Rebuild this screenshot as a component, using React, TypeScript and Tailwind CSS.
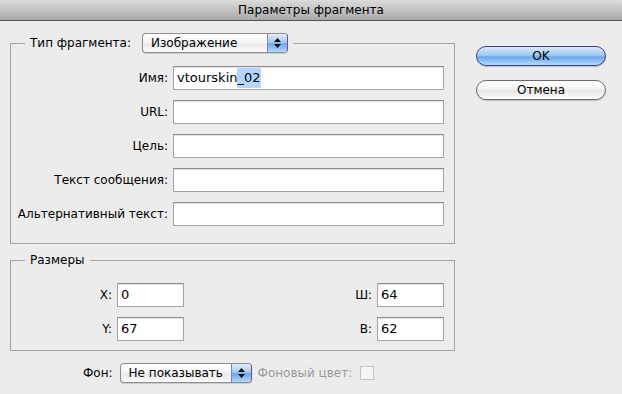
import type { ReactNode } from 'react';

const font = { fontFamily: '"DejaVu Sans", "Noto Sans", sans-serif' };

function Field({ value, selected, className = '' }: { value?: string; selected?: string; className?: string }) {
  return (
    <div
      className={`h-[24px] bg-white border border-[#a5a5a5] border-t-[#8c8c8c] shadow-[inset_0_1px_1px_rgba(0,0,0,0.12)] flex items-center pl-[3px] text-[13px] text-black whitespace-nowrap ${className}`}
    >
      {value}
      {selected && <span className="bg-[#b5d5ff]">{selected}</span>}
    </div>
  );
}

function Stepper() {
  return (
    <div className="w-[20px] h-full flex flex-col items-center justify-center gap-[2px] rounded-r-[4px] border-l border-[#7a86b8] bg-[linear-gradient(to_bottom,#e3eefb_0%,#a9c9ef_45%,#6fa6ea_55%,#b4dafc_100%)]">
      <svg width="7" height="4" viewBox="0 0 7 4">
        <path d="M3.5 0L7 4H0z" fill="#111" />
      </svg>
      <svg width="7" height="4" viewBox="0 0 7 4">
        <path d="M0 0h7L3.5 4z" fill="#111" />
      </svg>
    </div>
  );
}

function Popup({ label, className = '' }: { label: string; className?: string }) {
  return (
    <div
      className={`h-[20px] flex items-stretch rounded-[4px] border border-[#8f8f8f] border-r-[#5a4fa0] shadow-[0_1px_1px_rgba(0,0,0,0.15)] bg-[linear-gradient(to_bottom,#ffffff_0%,#f4f4f4_50%,#e9e9e9_55%,#fafafa_100%)] ${className}`}
    >
      <div className="flex-1 flex items-center pl-[8px] text-[12px] text-black whitespace-nowrap">{label}</div>
      <Stepper />
    </div>
  );
}

function Row({ label, children }: { label: string; children: ReactNode }) {
  return (
    <div className="flex items-center gap-[5px]">
      <div className="w-[157px] text-right text-[12px] text-black whitespace-nowrap">{label}</div>
      {children}
    </div>
  );
}

function Button({ children, primary }: { children: ReactNode; primary?: boolean }) {
  return (
    <div
      className={`w-[130px] h-[20px] rounded-full flex items-center justify-center text-[12px] text-black shadow-[0_1px_1px_rgba(0,0,0,0.2)] ${
        primary
          ? 'border border-[#3f3f8f] bg-[linear-gradient(to_bottom,#d9e9fb_0%,#a4c9f1_45%,#6ea8ec_55%,#aedbfd_100%)]'
          : 'border border-[#6c6c6c] bg-[linear-gradient(to_bottom,#ffffff_0%,#f5f5f5_45%,#e6e6e6_55%,#ffffff_100%)]'
      }`}
    >
      {children}
    </div>
  );
}

export default function App() {
  return (
    <div className="w-[622px] h-[394px] bg-[#ececec] overflow-hidden" style={font}>
      {/* title bar */}
      <div className="h-[21px] border-b border-[#525252] bg-[linear-gradient(to_bottom,#dcdcdc,#a9a9a9)] flex items-center justify-center text-[12px] text-black">
        Параметры фрагмента
      </div>

      <div className="flex">
        {/* left column */}
        <div className="pl-[10px] w-[466px]">
          <fieldset className="w-[445px] mt-[12px] border border-[#a3a3a3] pb-[17px]">
            <legend className="ml-[14px] px-[5px] flex items-center gap-[11px] h-[20px]">
              <span className="text-[12px] text-black">Тип фрагмента:</span>
              <Popup label="Изображение" className="w-[146px]" />
            </legend>
            <div className="flex flex-col gap-[10px] pt-[13px]">
              <Row label="Имя:">
                <Field value="vtourskin" selected="_02" className="w-[271px]" />
              </Row>
              <Row label="URL:">
                <Field className="w-[271px]" />
              </Row>
              <Row label="Цель:">
                <Field className="w-[271px]" />
              </Row>
              <Row label="Текст сообщения:">
                <Field className="w-[271px]" />
              </Row>
              <Row label="Альтернативный текст:">
                <Field className="w-[271px]" />
              </Row>
            </div>
          </fieldset>

          <fieldset className="w-[445px] mt-[8px] border border-[#a3a3a3] pb-[9px]">
            <legend className="ml-[14px] px-[5px] h-[16px] leading-[16px] text-[12px] text-black">Размеры</legend>
            <div className="flex flex-col gap-[10px] pt-[15px] pr-[10px]">
              <div className="flex items-center justify-between">
                <div className="flex items-center gap-[5px]">
                  <span className="w-[101px] text-right text-[12px] text-black">X:</span>
                  <Field value="0" className="w-[67px]" />
                </div>
                <div className="flex items-center gap-[5px]">
                  <span className="text-[12px] text-black">Ш:</span>
                  <Field value="64" className="w-[67px]" />
                </div>
              </div>
              <div className="flex items-center justify-between">
                <div className="flex items-center gap-[5px]">
                  <span className="w-[101px] text-right text-[12px] text-black">Y:</span>
                  <Field value="67" className="w-[67px]" />
                </div>
                <div className="flex items-center gap-[5px]">
                  <span className="text-[12px] text-black">В:</span>
                  <Field value="62" className="w-[67px]" />
                </div>
              </div>
            </div>
          </fieldset>

          <div className="mt-[12px] pl-[73px] flex items-center">
            <span className="text-[12px] text-black mr-[7px]">Фон:</span>
            <Popup label="Не показывать" className="w-[132px]" />
            <span className="ml-[6px] text-[12px] text-[#9a9a9a]">Фоновый цвет:</span>
            <div className="ml-[8px] w-[14px] h-[14px] border border-[#c4c4c4] bg-[#f4f4f4]" />
          </div>
        </div>

        {/* right column */}
        <div className="pl-[10px] pt-[25px] flex flex-col gap-[14px]">
          <Button primary>OK</Button>
          <Button>Отмена</Button>
        </div>
      </div>
    </div>
  );
}
